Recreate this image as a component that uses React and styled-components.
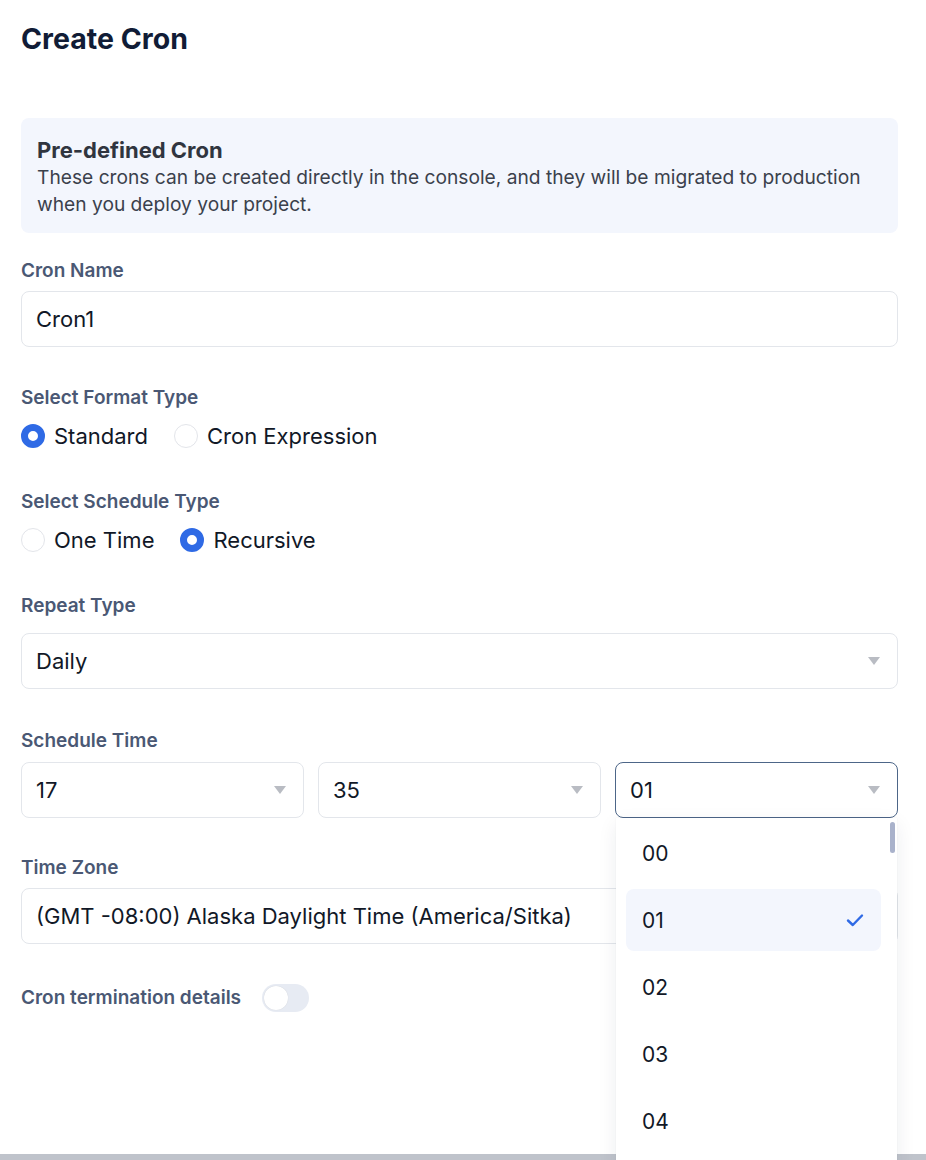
import styled, { createGlobalStyle } from 'styled-components'

const GlobalStyle = createGlobalStyle`
  html, body {
    margin: 0;
    padding: 0;
    background: #ffffff;
    overflow: hidden;
  }
  body {
    font-family: Inter, 'Noto Sans', sans-serif;
    color: #111827;
  }
`

const colors = {
  navy: '#111c36',
  label: '#4a5874',
  text: '#111827',
  border: '#e3e6eb',
  focus: '#4d6688',
  blue: '#2f6ae5',
  soft: '#f3f6fd',
}

const Page = styled.div`
  display: flex;
  flex-direction: column;
  height: 1160px;
`

const Content = styled.div`
  flex: 1;
  padding: 23px 28px 0 21px;
`

const Title = styled.h1`
  margin: 0;
  font-size: 28.5px;
  line-height: 32px;
  font-weight: 700;
  color: ${colors.navy};
`

const InfoBox = styled.div`
  margin-top: 63px;
  padding: 19px 16px 15px 16px;
  background: ${colors.soft};
  border-radius: 8px;
`

const InfoTitle = styled.div`
  font-size: 22px;
  line-height: 26px;
  font-weight: 700;
  color: #30353f;
`

const InfoText = styled.p`
  margin: 1px 0 0;
  font-size: 19.2px;
  line-height: 27px;
  color: #3b414c;
`

const Field = styled.div`
  margin-top: ${({ $top }) => $top}px;
`

const Label = styled.div`
  font-size: 19px;
  line-height: 22px;
  font-weight: 600;
  color: ${colors.label};
  margin-bottom: ${({ $gap }) => $gap ?? 9}px;
`

const Box = styled.div`
  position: relative;
  display: flex;
  align-items: center;
  justify-content: space-between;
  box-sizing: border-box;
  height: 56px;
  padding: 0 17px 0 14px;
  border: 1px solid ${({ $focused }) => ($focused ? colors.focus : colors.border)};
  border-radius: 8px;
  background: #fff;
  font-size: 22px;
  color: ${colors.text};
`

const Caret = styled.span`
  width: 0;
  height: 0;
  border-left: 6px solid transparent;
  border-right: 6px solid transparent;
  border-top: 8px solid #b9bcc3;
`

const RadioRow = styled.div`
  display: flex;
  align-items: center;
  gap: 26px;
  height: 28px;
`

const RadioOption = styled.label`
  display: flex;
  align-items: center;
  gap: 9px;
  font-size: 22px;
  color: ${colors.text};
`

const RadioDot = styled.span`
  box-sizing: border-box;
  width: 24px;
  height: 24px;
  border-radius: 50%;
  border: ${({ $on }) => ($on ? `7px solid ${colors.blue}` : '1px solid #e3e5ea')};
  background: #fff;
`

const TimeGrid = styled.div`
  display: grid;
  grid-template-columns: repeat(3, 1fr);
  gap: 14px;
`

const SelectWrap = styled.div`
  position: relative;
`

const Menu = styled.div`
  position: absolute;
  z-index: 5;
  top: 56px;
  left: 1px;
  right: 1px;
  height: 345px;
  padding: 4px 16px 0 10px;
  background: #fff;
  box-shadow: 0 6px 18px rgba(30, 41, 70, 0.08), 0 0 1px rgba(30, 41, 70, 0.08);
  overflow: hidden;
`

const Thumb = styled.span`
  position: absolute;
  top: 4px;
  right: 2px;
  width: 5px;
  height: 31px;
  border-radius: 3px;
  background: #a9b2cb;
`

const MenuItem = styled.div`
  display: flex;
  align-items: center;
  justify-content: space-between;
  height: 62px;
  margin-bottom: 5px;
  padding: 0 17px 0 16px;
  border-radius: 8px;
  background: ${({ $active }) => ($active ? colors.soft : 'transparent')};
  font-size: 21px;
  color: ${colors.text};
`

const ToggleRow = styled.div`
  display: flex;
  align-items: center;
  gap: 21px;
  margin-top: 40px;
`

const Track = styled.span`
  display: flex;
  align-items: center;
  box-sizing: border-box;
  width: 47px;
  height: 28px;
  padding: 2px;
  border-radius: 14px;
  background: #e7ebf3;
`

const Knob = styled.span`
  width: 24px;
  height: 24px;
  border-radius: 50%;
  background: #fff;
  box-shadow: 0 0 1px rgba(0, 0, 0, 0.15);
`

const Footer = styled.div`
  height: 6px;
  background: #bfc3cb;
`

const Check = () => (
  <svg width="18" height="14" viewBox="0 0 18 14" fill="none">
    <path d="M2 7.5 L6.8 12 L16 2.5" stroke={colors.blue} strokeWidth="2.4" strokeLinecap="round" strokeLinejoin="round" />
  </svg>
)

const seconds = ['00', '01', '02', '03', '04']

export default function App() {
  return (
    <Page>
      <GlobalStyle />
      <Content>
        <Title>Create Cron</Title>
        <InfoBox>
          <InfoTitle>Pre-defined Cron</InfoTitle>
          <InfoText>
            These crons can be created directly in the console, and they will be migrated to production
            when you deploy your project.
          </InfoText>
        </InfoBox>

        <Field $top={27}>
          <Label>Cron Name</Label>
          <Box>Cron1</Box>
        </Field>

        <Field $top={40}>
          <Label $gap={13}>Select Format Type</Label>
          <RadioRow>
            <RadioOption><RadioDot $on />Standard</RadioOption>
            <RadioOption><RadioDot />Cron Expression</RadioOption>
          </RadioRow>
        </Field>

        <Field $top={41}>
          <Label $gap={13}>Select Schedule Type</Label>
          <RadioRow>
            <RadioOption><RadioDot />One Time</RadioOption>
            <RadioOption><RadioDot $on />Recursive</RadioOption>
          </RadioRow>
        </Field>

        <Field $top={41}>
          <Label $gap={16}>Repeat Type</Label>
          <Box>Daily<Caret /></Box>
        </Field>

        <Field $top={41}>
          <Label $gap={10}>Schedule Time</Label>
          <TimeGrid>
            <Box>17<Caret /></Box>
            <Box>35<Caret /></Box>
            <SelectWrap>
              <Box $focused>01<Caret /></Box>
              <Menu>
                <Thumb />
                {seconds.map((s) => (
                  <MenuItem key={s} $active={s === '01'}>
                    {s}
                    {s === '01' && <Check />}
                  </MenuItem>
                ))}
              </Menu>
            </SelectWrap>
          </TimeGrid>
        </Field>

        <Field $top={39}>
          <Label>Time Zone</Label>
          <Box>(GMT -08:00) Alaska Daylight Time (America/Sitka)</Box>
        </Field>

        <ToggleRow>
          <Label $gap={0}>Cron termination details</Label>
          <Track><Knob /></Track>
        </ToggleRow>
      </Content>
      <Footer />
    </Page>
  )
}
